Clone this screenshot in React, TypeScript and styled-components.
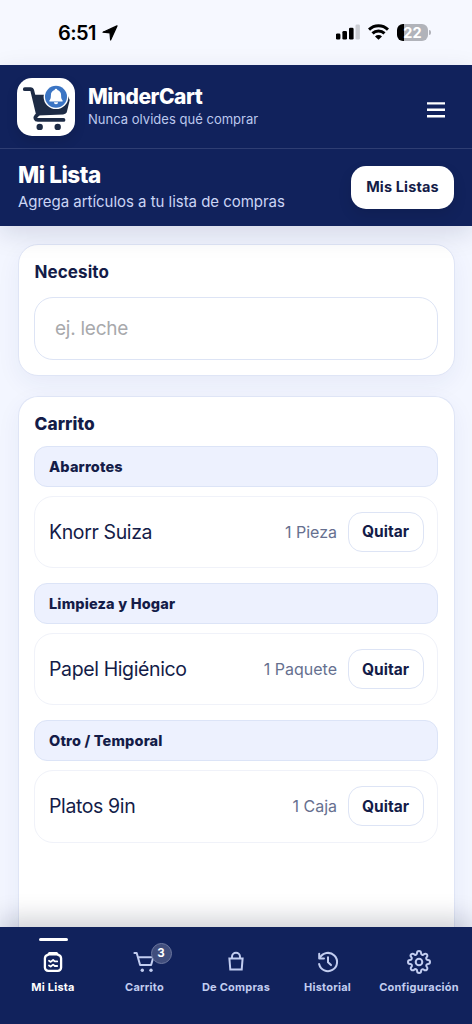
import React from "react";
import styled, { createGlobalStyle } from "styled-components";

const navy = "#11225c";
const ink = "#141c48";

const GlobalStyle = createGlobalStyle`
  *, *::before, *::after { box-sizing: border-box; }
  body {
    margin: 0;
    font-family: Inter, "Liberation Sans", sans-serif;
    color: ${ink};
    background: #f5f8ff;
  }
  h1, h2, h3, p, ul { margin: 0; padding: 0; }
  button, input { font-family: inherit; }
`;

const Screen = styled.div`
  display: flex;
  flex-direction: column;
  width: 100%;
  height: 1024px;
  overflow: hidden;
  background: #f3f6ff;
`;

const StatusBar = styled.div`
  flex: none;
  display: flex;
  align-items: center;
  justify-content: space-between;
  height: 65px;
  padding: 0 41px 0 58px;
  background: #f6f8ff;
  color: #000;
`;

const Clock = styled.div`
  display: flex;
  align-items: center;
  gap: 6px;
  font-size: 20px;
  font-weight: 600;
  line-height: 24px;
  letter-spacing: -0.6px;
`;

const Indicators = styled.div`
  display: flex;
  align-items: center;
  gap: 8px;
  margin-top: -1px;
`;

const Battery = styled.div`
  position: relative;
  display: flex;
  align-items: center;
  justify-content: center;
  width: 31px;
  height: 17px;
  margin-right: 3px;
  border-radius: 6px;
  background: linear-gradient(90deg, #000 7px, #b1b3ba 7px);
  color: #fff;
  font-size: 14.5px;
  font-weight: 700;
  line-height: 17px;

  &::after {
    content: "";
    position: absolute;
    right: -3px;
    top: 6px;
    width: 2px;
    height: 5px;
    border-radius: 0 2px 2px 0;
    background: #b1b3ba;
  }
`;

const Header = styled.header`
  position: relative;
  z-index: 1;
  flex: none;
  background: ${navy};
  box-shadow: 0 8px 24px rgba(17, 24, 70, 0.13);
`;

const BrandRow = styled.div`
  display: flex;
  align-items: center;
  height: 84px;
  padding: 0 27px 0 17px;
  border-bottom: 1px solid #2f3e73;
`;

const Logo = styled.div`
  width: 58px;
  height: 58px;
  border-radius: 15px;
  background: #fff;
  overflow: hidden;
  box-shadow: 0 5px 12px rgba(0, 0, 0, 0.12);
`;

const BrandText = styled.div`
  flex: 1;
  margin: 0 0 0 13px;
`;

const BrandName = styled.h1`
  color: #fff;
  font-size: 21px;
  font-weight: 800;
  line-height: 24px;
  letter-spacing: -0.5px;
`;

const Tagline = styled.p`
  color: #bcc8ee;
  font-size: 13px;
  line-height: 18px;
  margin-top: 1px;
  letter-spacing: 0.02px;
`;

const MenuButton = styled.button`
  display: flex;
  padding: 0;
  margin-top: 6px;
  border: 0;
  background: none;
`;

const TitleRow = styled.div`
  display: flex;
  align-items: center;
  justify-content: space-between;
  height: 77px;
  padding: 0 18px;
`;

const TitleText = styled.div`
  margin-top: -2px;
`;

const PageTitle = styled.h2`
  color: #fff;
  font-size: 22.5px;
  font-weight: 800;
  line-height: 27px;
  letter-spacing: -0.45px;
`;

const PageNote = styled.p`
  color: #cbd5f5;
  font-size: 15px;
  line-height: 20px;
  margin-top: 4px;
  letter-spacing: -0.03px;
`;

const ListsButton = styled.button`
  width: 103px;
  height: 43px;
  padding: 0 0 2px;
  border: 0;
  border-radius: 15px;
  background: #fff;
  color: ${ink};
  font-size: 14.5px;
  font-weight: 700;
  letter-spacing: 0.15px;
  box-shadow: 0 6px 14px rgba(0, 0, 0, 0.1);
`;

const Content = styled.main`
  flex: 1;
  min-height: 0;
  display: flex;
  flex-direction: column;
  gap: 20px;
  padding: 18px 17.5px 0;
`;

const Card = styled.section<{ $open?: boolean }>`
  flex: ${(p) => (p.$open ? "1" : "none")};
  padding: 15px 15.5px;
  border: 1px solid #dfe5f6;
  border-width: ${(p) => (p.$open ? "1px 1px 0" : "1px")};
  border-radius: ${(p) => (p.$open ? "20px 20px 0 0" : "20px")};
  background: #fff;
  box-shadow: 0 8px 24px rgba(30, 50, 130, 0.06);
`;

const CardTitle = styled.h2<{ $heavy?: boolean }>`
  padding-left: 0.5px;
  font-size: ${(p) => (p.$heavy ? "17.3px" : "17px")};
  font-weight: ${(p) => (p.$heavy ? 800 : 700)};
  line-height: 24px;
  letter-spacing: 0.08px;
`;

const ItemInput = styled.input`
  display: block;
  width: 100%;
  height: 63px;
  margin-top: 12.5px;
  margin-bottom: 0.5px;
  padding: 0 20px;
  border: 1px solid #dde4f5;
  border-radius: 19px;
  background: #fff;
  color: ${ink};
  font-size: 19px;
  letter-spacing: -0.25px;
  outline: none;

  &::placeholder { color: #a8a9ac; opacity: 1; }
`;

const Group = styled.div`
  margin-top: 9.5px;

  & + & { margin-top: 15px; }
`;

const GroupTitle = styled.h3`
  display: flex;
  align-items: center;
  height: 41px;
  padding: 0 14px;
  border: 1px solid #dce4f7;
  border-radius: 13px;
  background: #edf1fe;
  font-size: 14.5px;
  font-weight: 800;
  letter-spacing: 0.17px;
`;

const ItemRow = styled.div`
  display: flex;
  align-items: center;
  height: 72.4px;
  margin-top: 9px;
  padding: 0 13px 0 14px;
  border: 1px solid #f0f2f9;
  border-radius: 19px;
  background: #fff;
`;

const ItemName = styled.span`
  flex: 1;
  font-size: 19.5px;
  font-weight: 430;
  letter-spacing: -0.38px;
`;

const Quantity = styled.span`
  color: #66708f;
  font-size: 16px;
`;

const RemoveButton = styled.button`
  width: 76px;
  height: 40px;
  margin-left: 11px;
  padding: 0 1px 0 0;
  border: 1px solid #dde4f5;
  border-radius: 14px;
  background: #fff;
  color: ${ink};
  font-size: 15.5px;
  font-weight: 700;
`;

const TabBar = styled.nav`
  position: relative;
  z-index: 1;
  flex: none;
  display: grid;
  grid-template-columns: repeat(5, 91.5px);
  justify-content: center;
  height: 97px;
  background: ${navy};
  box-shadow: 0 -8px 24px rgba(10, 15, 40, 0.2);
`;

const Tab = styled.a<{ $active?: boolean }>`
  position: relative;
  display: flex;
  flex-direction: column;
  align-items: center;
  padding-top: 23px;
  color: ${(p) => (p.$active ? "#fff" : "#c2cdf0")};
  font-size: 11px;
  font-weight: 700;
  line-height: 16px;
  letter-spacing: 0.23px;
  white-space: nowrap;

  &::before {
    content: "";
    display: ${(p) => (p.$active ? "block" : "none")};
    position: absolute;
    top: 11px;
    width: 29px;
    height: 3px;
    border-radius: 2px;
    background: #fff;
  }
`;

const TabIcon = styled.span`
  position: relative;
  display: flex;
  margin-bottom: 4.5px;
`;

const Badge = styled.span`
  position: absolute;
  left: 18px;
  top: -7px;
  width: 21px;
  height: 21px;
  border: 1px solid #6c779f;
  border-radius: 50%;
  background: #414e7d;
  color: #fff;
  font-size: 11.5px;
  line-height: 19px;
  text-align: center;
`;

const LocationArrow = () => (
  <svg width="16" height="16" viewBox="0 0 16 16">
    <path
      d="M15 .9 1 7.2l7 .7.6 7.1Z"
      stroke="#000" strokeWidth="1.2" strokeLinejoin="round"
    />
  </svg>
);

const Signal = () => (
  <svg width="24" height="16" viewBox="0 0 24 16">
    <rect x="-0.2" y="9.5" width="4.6" height="6" rx="1.3" />
    <rect x="6.4" y="7" width="4.6" height="8.5" rx="1.3" />
    <rect x="13" y="3.7" width="4.6" height="11.8" rx="1.3" />
    <rect x="19.5" y="0.5" width="4.4" height="15" rx="1.3" fill="#cbcdd3" />
  </svg>
);

const Wifi = () => (
  <svg width="21" height="16" viewBox="0 0 21 16">
    <g fill="none" stroke="#000" strokeWidth="3">
      <path d="M1 5.6a13.6 13.6 0 0 1 19 0" />
      <path d="M4.5 9.4a8.6 8.6 0 0 1 12 0" />
    </g>
    <path d="M10.5 15.8 7 12.4a5 5 0 0 1 7 0Z" />
  </svg>
);

const CartLogo = () => (
  <svg width="58" height="58" viewBox="0 0 58 58">
    <path d="M16.5 16.8H50.5l2.2 5.2-2.6 11a4.5 4.5 0 0 1-4 3.4L20.5 37.4Z" fill="#1d2b45" />
    <path
      d="M7.8 11.2h5.6a2 2 0 0 1 1.9 1.5l5.6 23.6-1.6 1.5c-1.8 1.9-.9 4.1 1.6 4.1h25.6"
      fill="none" stroke="#1d2b45" strokeWidth="3.8" strokeLinecap="round" strokeLinejoin="round"
    />
    <path d="M22 38.7h25" stroke="#fff" strokeWidth="1.6" />
    <circle cx="22.7" cy="48.9" r="3.2" fill="#1d2b45" />
    <circle cx="40.7" cy="48.9" r="3.2" fill="#1d2b45" />
    <circle cx="39" cy="18.7" r="12.4" fill="#fff" />
    <circle cx="39" cy="18.7" r="11" fill="#3b75c4" />
    <path
      d="M39 10.8a1.4 1.4 0 0 1 1.4 1.3c2.4.7 3.7 2.6 3.7 5.1 0 3 .4 4.1 1.5 5.2v1.2H32.4v-1.2c1.1-1.1 1.5-2.2 1.5-5.2 0-2.5 1.3-4.4 3.7-5.1a1.4 1.4 0 0 1 1.4-1.3Zm-2.1 13.4h4.2a2.1 2.1 0 0 1-4.2 0Z"
      fill="#fff"
    />
  </svg>
);

const MenuIcon = () => (
  <svg width="18" height="16" viewBox="0 0 18 16">
    <path d="M0 1.4h18M0 7.8h18M0 14.2h18" stroke="#fff" strokeWidth="2.4" />
  </svg>
);

const stroked = {
  width: 24,
  height: 24,
  viewBox: "0 0 24 24",
  fill: "none",
  stroke: "currentColor",
  strokeWidth: 2,
  strokeLinecap: "round" as const,
  strokeLinejoin: "round" as const,
};

const ListIcon = () => (
  <svg {...stroked}>
    <path
      d="M8.3 3.2h7.4l1.2 1.6c2 .3 3.2 1.8 3.2 3.8v9a3.3 3.3 0 0 1-3.3 3.3H7.2a3.3 3.3 0 0 1-3.3-3.3v-9c0-2 1.2-3.5 3.2-3.8Z"
      strokeWidth="2.3"
    />
    <path d="M8.5 4.6h7" strokeWidth="2" />
    <path d="m8 10.8 1.7 1.1 2.4-1.9 1.7 1.4h2.4M8 15.4l1.7 1.1 2.4-1.9 1.7 1.4h2.4" strokeWidth="1.8" />
  </svg>
);

const CartIcon = () => (
  <svg {...stroked}>
    <path d="M1.4 3h2.3l3.4 12h11L20.3 7.3H5" strokeWidth="2" />
    <circle cx="9.3" cy="20.3" r="1.7" fill="currentColor" stroke="none" />
    <circle cx="18" cy="20.3" r="1.7" fill="currentColor" stroke="none" />
  </svg>
);

const BagIcon = () => (
  <svg {...stroked} strokeLinejoin="miter">
    <path d="M5.4 8.5h13.2L17.7 19.6H6.3Z" />
    <path d="M8 8V6.8a4 4 0 0 1 8 0V8" />
  </svg>
);

const HistoryIcon = () => (
  <svg {...stroked}>
    <path d="M3.9 7.8a9.1 9.1 0 1 1-.8 6.2" />
    <path d="M3.2 3.8v4.6h4.8M12 7.3v5l3 2.8" />
  </svg>
);

const GearIcon = () => (
  <svg {...stroked}>
    <circle cx="12" cy="12" r="3.3" />
    <path d="M19.4 15a1.65 1.65 0 0 0 .33 1.82l.06.06a2 2 0 1 1-2.83 2.83l-.06-.06a1.65 1.65 0 0 0-2.8 1.17V21a2 2 0 0 1-4 0v-.09a1.65 1.65 0 0 0-2.88-1.2l-.06.06a2 2 0 1 1-2.83-2.83l.06-.06A1.65 1.65 0 0 0 3.09 14H3a2 2 0 0 1 0-4h.09a1.65 1.65 0 0 0 1.2-2.88l-.06-.06a2 2 0 1 1 2.83-2.83l.06.06A1.65 1.65 0 0 0 10 3.09V3a2 2 0 0 1 4 0v.09a1.65 1.65 0 0 0 2.88 1.2l.06-.06a2 2 0 1 1 2.83 2.83l-.06.06A1.65 1.65 0 0 0 20.91 10H21a2 2 0 0 1 0 4h-.09a1.65 1.65 0 0 0-1.51 1Z" />
  </svg>
);

const groups = [
  { title: "Abarrotes", item: "Knorr Suiza", quantity: "1 Pieza" },
  { title: "Limpieza y Hogar", item: "Papel Higiénico", quantity: "1 Paquete" },
  { title: "Otro / Temporal", item: "Platos 9in", quantity: "1 Caja" },
];

const tabs = [
  { label: "Mi Lista", icon: <ListIcon />, active: true },
  { label: "Carrito", icon: <CartIcon />, badge: 3 },
  { label: "De Compras", icon: <BagIcon /> },
  { label: "Historial", icon: <HistoryIcon /> },
  { label: "Configuración", icon: <GearIcon /> },
];

export default function App() {
  return (
    <>
      <GlobalStyle />
      <Screen>
        <StatusBar>
          <Clock>
            6:51 <LocationArrow />
          </Clock>
          <Indicators>
            <Signal />
            <Wifi />
            <Battery>22</Battery>
          </Indicators>
        </StatusBar>
        <Header>
          <BrandRow>
            <Logo><CartLogo /></Logo>
            <BrandText>
              <BrandName>MinderCart</BrandName>
              <Tagline>Nunca olvides qué comprar</Tagline>
            </BrandText>
            <MenuButton aria-label="Menú"><MenuIcon /></MenuButton>
          </BrandRow>
          <TitleRow>
            <TitleText>
              <PageTitle>Mi Lista</PageTitle>
              <PageNote>Agrega artículos a tu lista de compras</PageNote>
            </TitleText>
            <ListsButton>Mis Listas</ListsButton>
          </TitleRow>
        </Header>
        <Content>
          <Card>
            <CardTitle>Necesito</CardTitle>
            <ItemInput placeholder="ej. leche" />
          </Card>
          <Card $open>
            <CardTitle $heavy>Carrito</CardTitle>
            {groups.map((g) => (
              <Group key={g.title}>
                <GroupTitle>{g.title}</GroupTitle>
                <ItemRow>
                  <ItemName>{g.item}</ItemName>
                  <Quantity>{g.quantity}</Quantity>
                  <RemoveButton>Quitar</RemoveButton>
                </ItemRow>
              </Group>
            ))}
          </Card>
        </Content>
        <TabBar>
          {tabs.map((t) => (
            <Tab key={t.label} $active={t.active}>
              <TabIcon>
                {t.icon}
                {t.badge && <Badge>{t.badge}</Badge>}
              </TabIcon>
              {t.label}
            </Tab>
          ))}
        </TabBar>
      </Screen>
    </>
  );
}
